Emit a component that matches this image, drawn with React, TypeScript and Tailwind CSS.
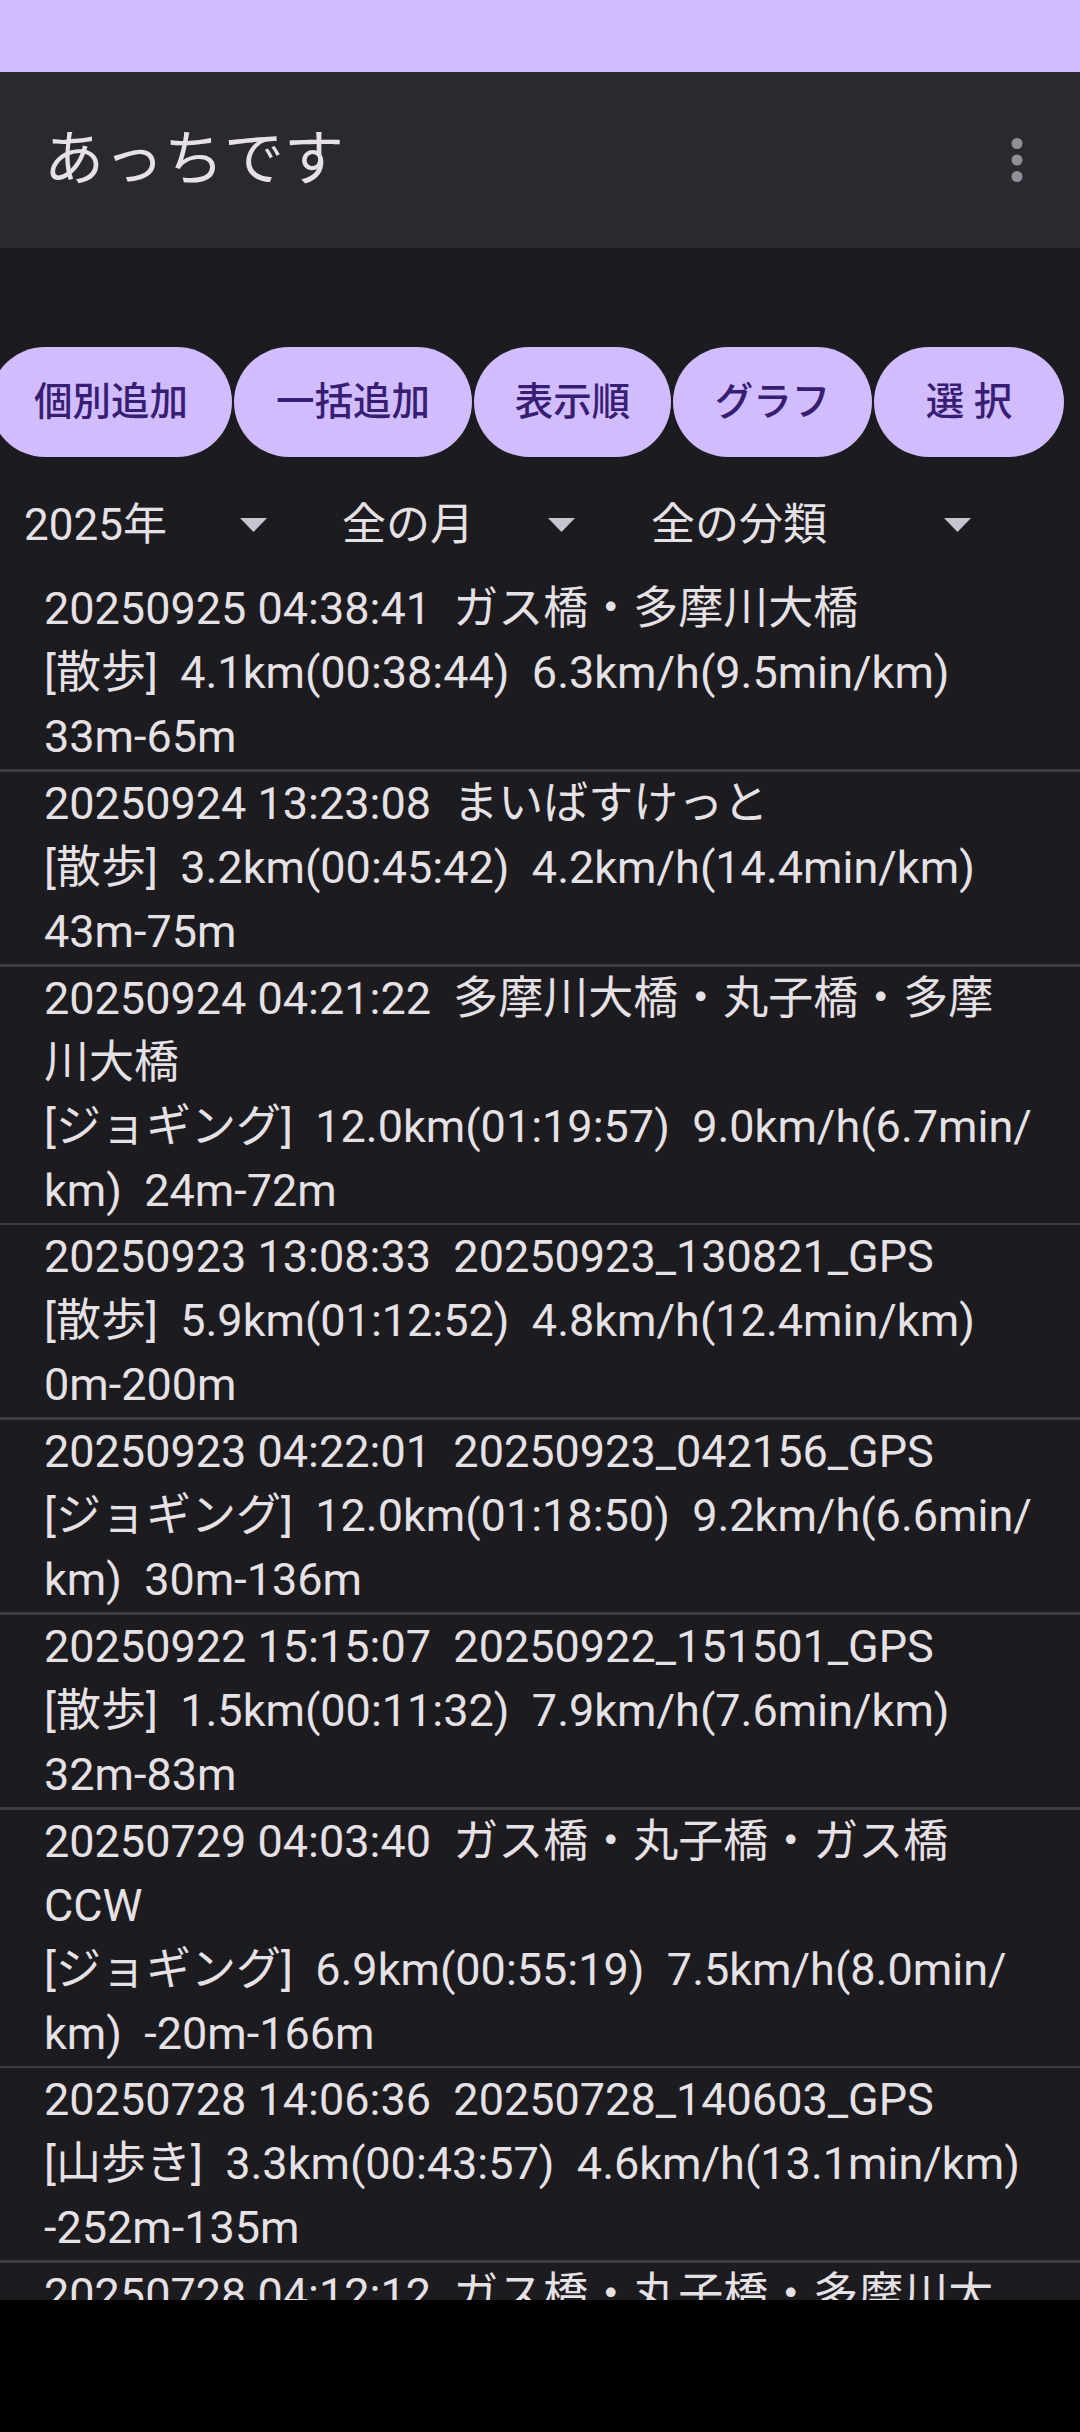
import React from "react";

const items: string[][] = [
  ["20250925 04:38:41  ガス橋・多摩川大橋", "[散歩]  4.1km(00:38:44)  6.3km/h(9.5min/km)", "33m-65m"],
  ["20250924 13:23:08  まいばすけっと", "[散歩]  3.2km(00:45:42)  4.2km/h(14.4min/km)", "43m-75m"],
  ["20250924 04:21:22  多摩川大橋・丸子橋・多摩", "川大橋", "[ジョギング]  12.0km(01:19:57)  9.0km/h(6.7min/", "km)  24m-72m"],
  ["20250923 13:08:33  20250923_130821_GPS", "[散歩]  5.9km(01:12:52)  4.8km/h(12.4min/km)", "0m-200m"],
  ["20250923 04:22:01  20250923_042156_GPS", "[ジョギング]  12.0km(01:18:50)  9.2km/h(6.6min/", "km)  30m-136m"],
  ["20250922 15:15:07  20250922_151501_GPS", "[散歩]  1.5km(00:11:32)  7.9km/h(7.6min/km)", "32m-83m"],
  ["20250729 04:03:40  ガス橋・丸子橋・ガス橋", "CCW", "[ジョギング]  6.9km(00:55:19)  7.5km/h(8.0min/", "km)  -20m-166m"],
  ["20250728 14:06:36  20250728_140603_GPS", "[山歩き]  3.3km(00:43:57)  4.6km/h(13.1min/km)", "-252m-135m"],
  ["20250728 04:12:12  ガス橋・丸子橋・多摩川大", "橋", "[ジョギング]  10.2km(01:08:31)  8.9km/h(6.7min/", "km)  12m-70m"],
];

const buttons = [
  { label: "個別追加", w: "w-[242px]" },
  { label: "一括追加", w: "w-[238px]" },
  { label: "表示順", w: "w-[197px]" },
  { label: "グラフ", w: "w-[199px]" },
  { label: "選 択", w: "w-[190px]" },
];

function Arrow() {
  return (
    <svg width="27" height="14" viewBox="0 0 27 14" className="shrink-0">
      <polygon points="0,0 27,0 13.5,14" fill="#c9c5d0" />
    </svg>
  );
}

export default function App() {
  const font = { fontFamily: 'Roboto, "Noto Sans CJK JP", sans-serif' };
  return (
    <div className="w-[1080px] h-[2432px] flex flex-col bg-black overflow-hidden" style={font}>
      <div className="h-[2300px] flex flex-col bg-[#1c1b1f] overflow-hidden">
        {/* status bar */}
        <div className="h-[72px] shrink-0 bg-[#d0bcff]" />
        {/* app bar */}
        <div className="h-[176px] shrink-0 bg-[#2b2930] flex items-center justify-between pl-[44px] pr-[30px]">
          <div className="text-[60px] leading-none text-[#e6e1e5]">あっちです</div>
          <svg width="66" height="66" viewBox="0 0 24 24">
            <circle cx="12" cy="6" r="2" fill="#938f99" />
            <circle cx="12" cy="12" r="2" fill="#938f99" />
            <circle cx="12" cy="18" r="2" fill="#938f99" />
          </svg>
        </div>
        {/* buttons */}
        <div className="mt-[99px] flex gap-[2px] -ml-[10px] shrink-0">
          {buttons.map((b) => (
            <div
              key={b.label}
              className={`${b.w} h-[110px] shrink-0 rounded-full bg-[#d0bcff] flex items-center justify-center text-[38.5px] font-medium text-[#381e72] whitespace-pre`}
            >
              {b.label}
            </div>
          ))}
        </div>
        {/* spinners */}
        <div className="h-[120px] pt-[16px] flex items-center shrink-0 text-[44px] text-[#e6e1e5]">
          <div className="w-[318px] pl-[24px] pr-[51px] flex items-center justify-between">
            <span>2025年</span>
            <Arrow />
          </div>
          <div className="w-[309px] pl-[24px] pr-[52px] flex items-center justify-between">
            <span>全の月</span>
            <Arrow />
          </div>
          <div className="w-[395px] pl-[24px] pr-[51px] flex items-center justify-between">
            <span>全の分類</span>
            <Arrow />
          </div>
        </div>
        {/* list */}
        <div className="flex flex-col">
          {items.map((lines, i) => (
            <div key={i} className="flex flex-col">
              <div className="pl-[44px] text-[45px] leading-[64px] text-[#e6e1e5]">
                {lines.map((l, j) => (
                  <div key={j} className="whitespace-pre">
                    {l}
                  </div>
                ))}
              </div>
              <div className="h-[2.75px] bg-[#3d3c42]" />
            </div>
          ))}
        </div>
      </div>
      <div className="h-[132px] bg-black" />
    </div>
  );
}
